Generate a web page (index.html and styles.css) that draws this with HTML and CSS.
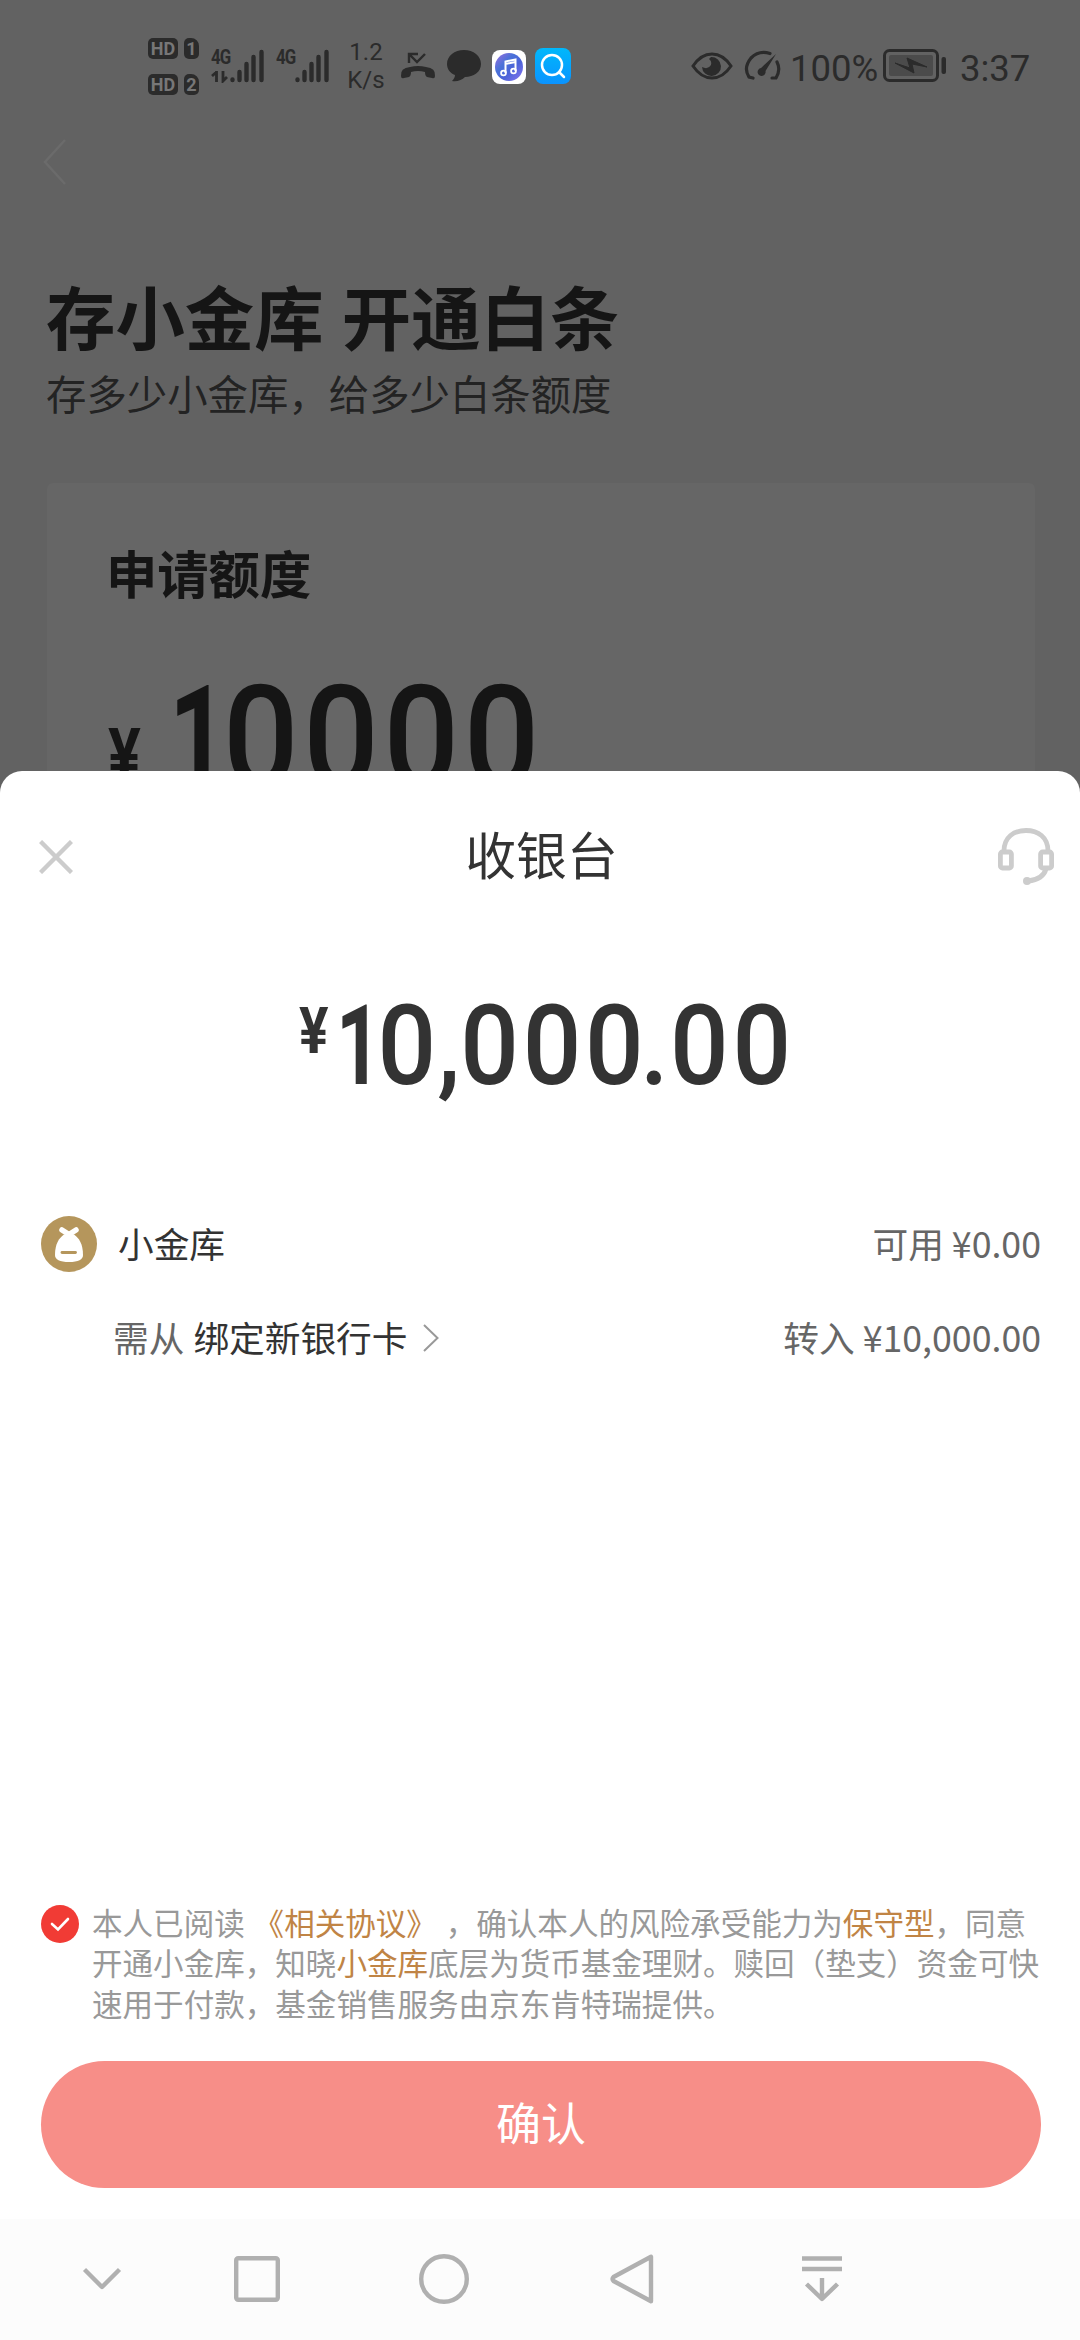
FILE: index.html
```html
<!DOCTYPE html>
<html lang="zh-CN">
<head>
<meta charset="utf-8">
<title>收银台</title>
<link rel="stylesheet" href="styles.css">
</head>
<body>
<div class="backdrop">
  <header class="status">
    <div class="hd-group">
      <div class="hd-row"><span class="hd">HD</span><span class="sim">1</span></div>
      <div class="hd-row"><span class="hd">HD</span><span class="sim">2</span></div>
    </div>
    <div class="signal">
      <span class="net">4G</span>
      <svg class="bars" width="54" height="34" viewBox="0 0 54 34">
        <path d="M5.500 22V33M1 27L5.500 23M12 22V32L16 28" fill="none" stroke="#2b2b2b" stroke-width="2.800"/>
        <path d="M21.500 30.500V31M28.500 23V31M35.500 15V31M42.500 8V31M50.500 3V31" stroke="#2b2b2b" stroke-width="4.400" stroke-linecap="round"/>
      </svg>
    </div>
    <div class="signal signal-two">
      <span class="net">4G</span>
      <svg class="bars" width="54" height="34" viewBox="0 0 54 34">
        <path d="M21.500 30.500V31M28.500 23V31M35.500 15V31M42.500 8V31M50.500 3V31" stroke="#2b2b2b" stroke-width="4.400" stroke-linecap="round"/>
      </svg>
    </div>
    <div class="speed"><span>1.2</span><span>K/s</span></div>
    <svg class="missed" width="36" height="28" viewBox="0 0 36 28">
      <path d="M9 11V2H18M9 2L17 10L25 2" fill="none" stroke="#2b2b2b" stroke-width="2.400"/>
      <path d="M1 24Q0 16 10 15Q18 13 26 15Q36 16 35 24Q35 27 32 26L27 25Q25 24 25 20Q18 18 11 20Q11 24 9 25L4 26Q1 27 1 24Z" fill="#2b2b2b"/>
    </svg>
    <svg class="chat" width="34" height="32" viewBox="0 0 34 32">
      <path d="M17 0C26.500 0 34 6 34 14C34 22 26.500 27 18 27C15 30 10 32 5 31C7 29 8 27 8 25C3 23 0 19 0 14C0 6 7.500 0 17 0Z" fill="#2b2b2b"/>
    </svg>
    <svg class="music" width="34" height="34" viewBox="0 0 34 34">
      <defs><linearGradient id="tune" x1="0" y1="0" x2="1" y2="1"><stop offset="0" stop-color="#a06ee0"/><stop offset=".35" stop-color="#4a72d8"/><stop offset=".6" stop-color="#4a62d8"/><stop offset="1" stop-color="#8a76f0"/></linearGradient></defs>
      <rect width="34" height="34" rx="8" fill="#fff"/>
      <circle cx="17" cy="17" r="14" fill="url(#tune)"/>
      <path d="M13.500 23V11.500L23.500 9.500V21M13.500 14L23.500 12" fill="none" stroke="#fff" stroke-width="2"/>
      <circle cx="11.500" cy="23" r="2.400" fill="none" stroke="#fff" stroke-width="1.800"/><circle cx="21.500" cy="21" r="2.400" fill="none" stroke="#fff" stroke-width="1.800"/>
    </svg>
    <svg class="search" width="36" height="36" viewBox="0 0 36 36">
      <defs><linearGradient id="sky" x1="0" y1="0" x2="0" y2="1"><stop offset="0" stop-color="#00b8fb"/><stop offset="1" stop-color="#0b93ff"/></linearGradient></defs>
      <rect width="36" height="36" rx="8" fill="url(#sky)"/>
      <circle cx="17" cy="17" r="10" fill="none" stroke="#fff" stroke-width="2.500"/>
      <path d="M24 24L29 29" stroke="#fff" stroke-width="2.500" stroke-linecap="round"/>
    </svg>
    <svg class="eye" width="42" height="28" viewBox="0 0 42 28">
      <path d="M2 14Q10 2 21 2T40 14Q32 26 21 26T2 14Z" fill="none" stroke="#2b2b2b" stroke-width="3"/>
      <path d="M20 5A9.500 9.500 0 1 1 11 15Q17 18 20 13Q21 9 18 7Z" fill="#2b2b2b"/>
    </svg>
    <svg class="gauge" width="37" height="32" viewBox="0 0 37 32">
      <path d="M26 3.500Q15 0 7 8Q-1 18 5 27L9 28M33 12Q37 20 32 28L28 28" fill="none" stroke="#2b2b2b" stroke-width="3.200" stroke-linecap="round"/>
      <path d="M32 4L21.500 21A4 4 0 1 1 17 18Z" fill="#2b2b2b"/>
    </svg>
    <span class="percent">100%</span>
    <svg class="battery" width="64" height="34" viewBox="0 0 64 34">
      <rect x="1.500" y="1.500" width="53" height="30" rx="5" fill="none" stroke="#2b2b2b" stroke-width="3"/>
      <rect x="6" y="6" width="44" height="21" rx="2" fill="#4b4b4b"/>
      <path d="M12 14L27 19L24 9L44 18L29 15L31 24Z" fill="#2b2b2b" stroke="#2b2b2b"/>
      <rect x="58.500" y="8" width="4.500" height="17" rx="2" fill="#2b2b2b"/>
    </svg>
    <span class="clock">3:37</span>
  </header>

  <svg class="back" width="24" height="46" viewBox="0 0 24 46"><path d="M22 1L2 23L22 45" fill="none" stroke="#6b6b6b" stroke-width="2.500"/></svg>
  <h1 class="headline">存小金库 开通白条</h1>
  <p class="lead">存多少小金库，给多少白条额度</p>
  <section class="quota">
    <h2 class="quota-title">申请额度</h2>
    <div class="quota-sum"><span class="quota-sign">¥</span><div class="digits"><span class="one">1</span><span>0000</span></div></div>
  </section>
</div>

<main class="sheet">
  <div class="sheet-head">
    <svg width="34" height="34" viewBox="0 0 34 34"><path d="M1.500 1.500L32.500 32.500M32.500 1.500L1.500 32.500" stroke="#ccc" stroke-width="4.400"/></svg>
    <h2 class="sheet-title">收银台</h2>
    <svg width="56" height="58" viewBox="0 0 56 58">
      <g fill="none" stroke="#ccc" stroke-width="4.800">
        <path d="M6 23C6 9 16 2.500 28 2.500S50 9 50 23" />
        <rect x="2.400" y="24" width="11" height="16" rx="2"/><rect x="42.600" y="24" width="11" height="16" rx="2"/>
        <path d="M48 41C46 48 40 52 30 53"/>
      </g>
      <circle cx="29" cy="53" r="4" fill="#ccc"/>
    </svg>
  </div>
  <div class="total"><span class="total-sign">¥</span><div class="digits"><span class="one">1</span><span>0</span><span class="comma">,</span><span>000</span><span class="dot">.</span><span>00</span></div></div>
  <div class="row">
    <svg class="coin" width="56" height="56" viewBox="0 0 56 56">
      <circle cx="28" cy="28" r="28" fill="#b5965c"/>
      <path d="M23 18.500H33C38 22 42 28 42 39Q42 46 28 46T14 39C14 28 18 22 23 18.500Z" fill="#fff"/>
      <path d="M21 14L28 18.500L35 14" fill="none" stroke="#fff" stroke-width="5.500" stroke-linecap="round" stroke-linejoin="round"/>
      <path d="M21 36.500H34.500" stroke="#b5965c" stroke-width="2.800" stroke-linecap="round"/>
    </svg>
    <span class="dark">小金库</span>
    <span class="value">可用 ¥0.00</span>
  </div>
  <div class="row row-source">
    <span class="muted">需从</span><span class="dark source">绑定新银行卡</span>
    <svg class="more" width="16" height="28" viewBox="0 0 16 28"><path d="M1 1L14.500 14L1 27" fill="none" stroke="#999" stroke-width="2"/></svg>
    <span class="value">转入 ¥10,000.00</span>
  </div>
  <div class="terms">
    <svg class="check" width="38" height="38" viewBox="0 0 38 38"><circle cx="19" cy="19" r="19" fill="#f13b35"/><path d="M11 19L17 24.500L27 14" fill="none" stroke="#fff" stroke-width="2.600" stroke-linecap="round"/></svg>
    <p class="terms-text">
      <span class="line first">本人已阅读 <b>《相关协议》</b> ，确认本人的风险承受能力为<b>保守型</b>，同意</span>
      <span class="line">开通小金库，知晓<b>小金库</b>底层为货币基金理财。赎回（垫支）资金可快</span>
      <span class="line">速用于付款，基金销售服务由京东肯特瑞提供。</span>
    </p>
  </div>
  <button class="confirm">确认</button>
</main>

<nav class="nav">
  <svg width="40" height="50" viewBox="0 0 40 50"><path d="M2.500 15.500L20 33L37.500 15.500" /></svg>
  <svg width="46" height="50" viewBox="0 0 46 50"><rect x="2.200" y="4.200" width="41.600" height="41.600" rx="2"/></svg>
  <svg width="50" height="50" viewBox="0 0 50 50"><circle cx="25" cy="25" r="22.800"/></svg>
  <svg width="44" height="50" viewBox="0 0 44 50"><path d="M41 2.800V47.200L3.500 27Q1.500 25 3.500 23Z"/></svg>
  <svg width="42" height="50" viewBox="0 0 42 50"><path d="M1 4.500H41M1 15H41M21 24V44M5.500 30L21 45L36.500 30"/></svg>
</nav>
</body>
</html>
```
FILE: styles.css
```css
* { box-sizing: border-box; }
body {
  margin: 0;
  width: 1080px;
  height: 2340px;
  display: flex;
  flex-direction: column;
  overflow: hidden;
  background: #fff;
  font-family: "Noto Sans CJK SC", sans-serif;
  color: #333;
}
svg { display: block; flex: none; }
h1, h2, p { margin: 0; }

.backdrop {
  height: 801px;
  flex: none;
  overflow: hidden;
  background: #626262;
  color: #151515;
}

/* Status bar */
.status {
  height: 134px;
  padding: 0 53px 2px 148px;
  display: flex;
  align-items: center;
  font-family: Roboto, sans-serif;
  color: #2b2b2b;
}
.hd-group { display: flex; flex-direction: column; gap: 15px; }
.hd-row { display: flex; gap: 6px; }
.hd, .sim {
  height: 21px;
  border-radius: 5px;
  background: #2b2b2b;
  color: #777;
  font-size: 18px;
  line-height: 22px;
  font-weight: 700;
  text-align: center;
}
.hd { width: 30px; }
.sim { width: 15px; border-top-right-radius: 8px; }
.signal { width: 54px; height: 34px; margin-left: 12px; display: grid; }
.signal > * { grid-area: 1 / 1; }
.signal-two { margin-left: 11px; }
.net { font-size: 21px; line-height: 16px; font-weight: 700; letter-spacing: -1px; transform: scaleX(.8); transform-origin: left; align-self: start; }
.speed {
  width: 38px;
  margin: 0 15px 0 17px;
  display: flex;
  flex-direction: column;
  align-items: center;
  font-size: 24px;
  line-height: 28px;
}
.chat { margin-left: 11px; }
.music { margin-left: 11px; margin-top: 1px; }
.search { margin-left: 9px; }
.eye { margin-left: auto; }
.gauge { margin-left: 11px; }
.percent { margin-left: 9px; width: 87px; }
.percent, .clock { padding-top: 4px; font-size: 36.500px; white-space: nowrap; }
.battery { margin-left: 6px; }
.clock { margin-left: 13px; width: 67px; }

/* Page under the sheet */
.back { margin: 5px 0 0 43px; }
.headline { margin: 80px 0 0 46px; font-size: 69.400px; line-height: 100px; font-weight: 700; word-spacing: 2.500px; }
.lead { margin: 0 0 0 46px; padding-top: 3px; font-size: 40.400px; line-height: 50px; color: #232323; }
.quota { margin: 65px 45px 0 47px; height: 400px; padding: 56px 60px; border-radius: 6px; background: #666; }
.quota-title { margin-left: -1px; font-size: 51.300px; line-height: 66px; font-weight: 700; }
.quota-sum { margin-top: 62px; display: flex; font: 500 143px/143px Roboto, sans-serif; }
.quota-sign { width: 63px; margin-left: 1px; margin-top: -2px; font-size: 73px; line-height: 180px; font-weight: 700; transform: scaleX(.84); transform-origin: left; }

/* Narrow figures for the large sums */
.digits { display: flex; transform: scaleX(.93); transform-origin: left; }
.one { font-weight: 700; transform: scaleX(.76); transform-origin: left; }
.quota-sum .digits { margin-left: -2px; letter-spacing: 5px; }
.quota-sum .one { margin-right: -29px; }

/* Cashier sheet */
.sheet {
  position: relative;
  height: 1448px;
  flex: none;
  margin-top: -30px;
  border-radius: 22px 22px 0 0;
  background: #fff;
}
.sheet-head { height: 172px; padding: 0 26px 0 39px; display: flex; align-items: center; justify-content: space-between; }
.sheet-title { font-size: 50.800px; line-height: 72px; font-weight: 400; padding: 0 0 8px 12px; }
.total { height: 202px; padding: 48px 0 0 299px; display: flex; font: 500 111px/111px Roboto, sans-serif; }
.total-sign { width: 37px; padding-top: 4px; font-size: 64px; line-height: 74px; font-weight: 700; transform: scaleX(.86); transform-origin: left; }
.total .digits { letter-spacing: 4px; }
.total .one { margin-right: -23px; }
.comma { margin: 0 -4px 0 -3px; }
.dot { margin: 0 -2.500px 0 -8px; }

.row { height: 94px; margin-top: 52px; padding: 0 39px 0 41px; display: flex; align-items: center; font-size: 35.700px; line-height: 52px; }
.row span { padding-bottom: 3px; }
.row-source { margin-top: 0; padding-left: 113px; }
.dark { color: #333; }
.coin { margin-right: 21px; }
.muted, .value { color: #666; }
.source { margin-left: 9px; }
.more { margin-left: 15px; }
.value { margin-left: auto; }

.terms { margin-top: 517px; padding-left: 41px; display: flex; gap: 13px; }
.check { margin-top: 3px; }
.terms-text { font-size: 30.550px; line-height: 40.400px; color: #999; white-space: nowrap; }
.terms-text b { font-weight: 400; color: #c08445; }
.line { display: block; }
.first { word-spacing: 2px; }

.confirm {
  display: block;
  width: 1000px;
  height: 127px;
  margin: 38px 0 0 41px;
  padding: 0 0 6px;
  border: 0;
  border-radius: 64px;
  background: #f78e88;
  color: #fff;
  font: 400 45px/120px "Noto Sans CJK SC", sans-serif;
}

/* System navigation */
.nav {
  height: 121px;
  padding: 0 0 1px 82px;
  display: flex;
  align-items: center;
  background: #fcfcfc;
}
.nav svg { fill: none; stroke: #b0b0b0; stroke-width: 4.400px; stroke-linejoin: round; }
.nav svg:nth-child(2) { margin-left: 112px; }
.nav svg:nth-child(3) { margin-left: 139px; }
.nav svg:nth-child(4) { margin-left: 141px; }
.nav svg:nth-child(5) { margin-left: 147px; }
```
